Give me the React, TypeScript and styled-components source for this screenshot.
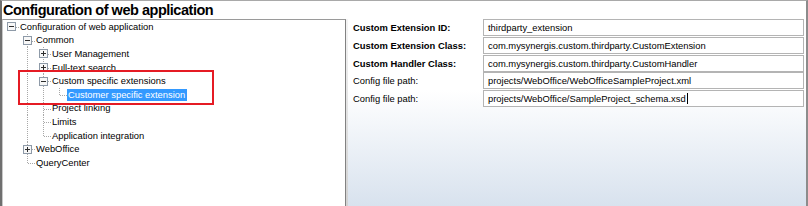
import React from 'react';
import styled, { createGlobalStyle } from 'styled-components';

const GlobalStyle = createGlobalStyle`
  html, body {
    margin: 0;
    padding: 0;
    background: #ffffff;
  }
  body {
    font-family: "Liberation Sans", Arial, sans-serif;
    color: #000000;
  }
`;

type TreeNode = {
  label: string;
  expander?: 'plus' | 'minus';
  selected?: boolean;
  children?: TreeNode[];
};

type CellKind = 'blank' | 'pipe' | 'tee' | 'elbow' | 'root';

type Row = {
  node: TreeNode;
  cells: CellKind[];
};

const tree: TreeNode = {
  label: 'Configuration of web application',
  expander: 'minus',
  children: [
    {
      label: 'Common',
      expander: 'minus',
      children: [
        { label: 'User Management', expander: 'plus' },
        { label: 'Full-text search', expander: 'plus' },
        {
          label: 'Custom specific extensions',
          expander: 'minus',
          children: [{ label: 'Customer specific extension', selected: true }],
        },
        { label: 'Project linking' },
        { label: 'Limits' },
        { label: 'Application integration' },
      ],
    },
    { label: 'WebOffice', expander: 'plus' },
    { label: 'QueryCenter' },
  ],
};

const fields = [
  { label: 'Custom Extension ID:', value: 'thirdparty_extension', strong: true },
  { label: 'Custom Extension Class:', value: 'com.mysynergis.custom.thirdparty.CustomExtension', strong: true },
  { label: 'Custom Handler Class:', value: 'com.mysynergis.custom.thirdparty.CustomHandler', strong: true },
  { label: 'Config file path:', value: 'projects/WebOffice/WebOfficeSampleProject.xml', strong: false },
  { label: 'Config file path:', value: 'projects/WebOffice/SampleProject_schema.xsd', strong: false, caret: true },
];

// flatten the tree into rows with the connector kind of every gutter cell
function flatten(node: TreeNode, level: number, ancestorsLast: boolean[], isLast: boolean, out: Row[]) {
  const cells: CellKind[] = [];
  if (level === 0) {
    cells.push('root');
  } else {
    cells.push('blank');
    for (let i = 1; i < level; i++) cells.push(ancestorsLast[i] ? 'blank' : 'pipe');
    cells.push(isLast ? 'elbow' : 'tee');
  }
  out.push({ node, cells });
  const kids = node.children ?? [];
  kids.forEach((child, i) => {
    flatten(child, level + 1, [...ancestorsLast, isLast], i === kids.length - 1, out);
  });
  return out;
}

const rows = flatten(tree, 0, [], true, []);

const dotsV = 'repeating-linear-gradient(to bottom, #a8a8a8 0 1px, transparent 1px 2px)';
const dotsH = 'repeating-linear-gradient(to right, #a8a8a8 0 1px, transparent 1px 2px)';

const cellBackground = (kind: CellKind) => {
  switch (kind) {
    case 'pipe':
      return `background-image: ${dotsV}; background-size: 1px 100%; background-position: 8px 0;`;
    case 'tee':
      return `background-image: ${dotsV}, ${dotsH}; background-size: 1px 100%, 8px 1px; background-position: 8px 0, 9px 7px;`;
    case 'elbow':
      return `background-image: ${dotsV}, ${dotsH}; background-size: 1px 7px, 8px 1px; background-position: 8px 0, 9px 7px;`;
    case 'root':
      return `background-image: ${dotsH}; background-size: 8px 1px; background-position: 9px 7px;`;
    default:
      return '';
  }
};

const Window = styled.div`
  width: 808px;
  height: 206px;
  box-sizing: border-box;
  border-top: 1px solid #a9a9a9;
  border-left: 2px solid #6f6f6f;
  border-right: 2px solid #8c8c8c;
  display: flex;
  flex-direction: column;
  overflow: hidden;
  background: #ffffff;
`;

const TitleBar = styled.div`
  height: 18px;
  flex: none;
  padding-left: 1px;
  font-size: 14.5px;
  font-weight: 700;
  line-height: 18px;
  letter-spacing: -0.48px;
  white-space: nowrap;
`;

const Body = styled.div`
  flex: 1;
  display: flex;
  min-height: 0;
`;

const TreePanel = styled.div`
  position: relative;
  width: 344px;
  flex: none;
  box-sizing: border-box;
  border-top: 1px solid #9a9a9a;
  border-left: 1px solid #c8c8c8;
  border-right: 1px solid #828282;
  background: #ffffff;
`;

const Splitter = styled.div`
  width: 2px;
  flex: none;
  background: linear-gradient(to bottom, #f4f4f4, #d2d2d2);
`;

const TreeRow = styled.div`
  display: flex;
  align-items: center;
  height: 13.6px;
  font-size: 9.4px;
  white-space: nowrap;
`;

const Cell = styled.span<{ $kind: CellKind }>`
  width: 16px;
  height: 100%;
  flex: none;
  display: flex;
  align-items: center;
  justify-content: center;
  background-repeat: no-repeat;
  ${(p) => cellBackground(p.$kind)}
`;

const Expander = styled.span`
  width: 9px;
  height: 9px;
  display: block;
  margin-left: 1px;
  background: #ffffff;
  line-height: 0;
`;

const NodeLabel = styled.span<{ $selected?: boolean }>`
  margin-left: 0;
  padding: 0 2px 0 1px;
  line-height: 12px;
  background: ${(p) => (p.$selected ? '#3399ff' : 'transparent')};
  color: ${(p) => (p.$selected ? '#ffffff' : '#000000')};
`;

const Highlight = styled.div`
  position: absolute;
  left: 15px;
  top: 50px;
  width: 196px;
  height: 35px;
  box-sizing: border-box;
  border: 2.5px solid #e51b24;
  pointer-events: none;
`;

const DetailPanel = styled.div`
  flex: 1;
  padding: 0 2px 0 5px;
  display: grid;
  grid-template-columns: 130px 1fr;
  grid-auto-rows: 17px;
  row-gap: 0.75px;
  align-content: start;
  background: linear-gradient(to bottom, #ffffff 0%, #ffffff 38%, #d8e2ee 100%);
`;

const FieldLabel = styled.div<{ $strong?: boolean }>`
  display: flex;
  align-items: center;
  font-size: 9.4px;
  font-weight: ${(p) => (p.$strong ? 700 : 400)};
  white-space: nowrap;
`;

const FieldBox = styled.div`
  box-sizing: border-box;
  display: flex;
  align-items: center;
  padding-left: 4px;
  border: 1px solid #b4b4b4;
  background: #ffffff;
  font-size: 9.4px;
  white-space: nowrap;
  overflow: hidden;
`;

const Caret = styled.span`
  display: inline-block;
  width: 1px;
  height: 11px;
  margin-left: 1px;
  background: #000000;
`;

const ExpanderIcon: React.FC<{ kind: 'plus' | 'minus' }> = ({ kind }) => (
  <Expander>
    <svg width="9" height="9" viewBox="0 0 9 9">
      <rect x="0.5" y="0.5" width="8" height="8" fill="#f7f7f7" stroke="#8e9aa8" />
      <line x1="2" y1="4.5" x2="7" y2="4.5" stroke="#2d2d2d" />
      {kind === 'plus' && <line x1="4.5" y1="2" x2="4.5" y2="7" stroke="#2d2d2d" />}
    </svg>
  </Expander>
);

const App: React.FC = () => {
  return (
    <>
      <GlobalStyle />
      <Window>
        <TitleBar>Configuration of web application</TitleBar>
        <Body>
          <TreePanel>
            {rows.map((row, i) => (
              <TreeRow key={i}>
                {row.cells.map((kind, c) => (
                  <Cell key={c} $kind={kind}>
                    {c === row.cells.length - 1 && row.node.expander && (
                      <ExpanderIcon kind={row.node.expander} />
                    )}
                  </Cell>
                ))}
                <NodeLabel $selected={row.node.selected}>{row.node.label}</NodeLabel>
              </TreeRow>
            ))}
            <Highlight />
          </TreePanel>
          <Splitter />
          <DetailPanel>
            {fields.map((f, i) => (
              <React.Fragment key={i}>
                <FieldLabel $strong={f.strong}>{f.label}</FieldLabel>
                <FieldBox>
                  {f.value}
                  {f.caret && <Caret />}
                </FieldBox>
              </React.Fragment>
            ))}
          </DetailPanel>
        </Body>
      </Window>
    </>
  );
};

export default App;
